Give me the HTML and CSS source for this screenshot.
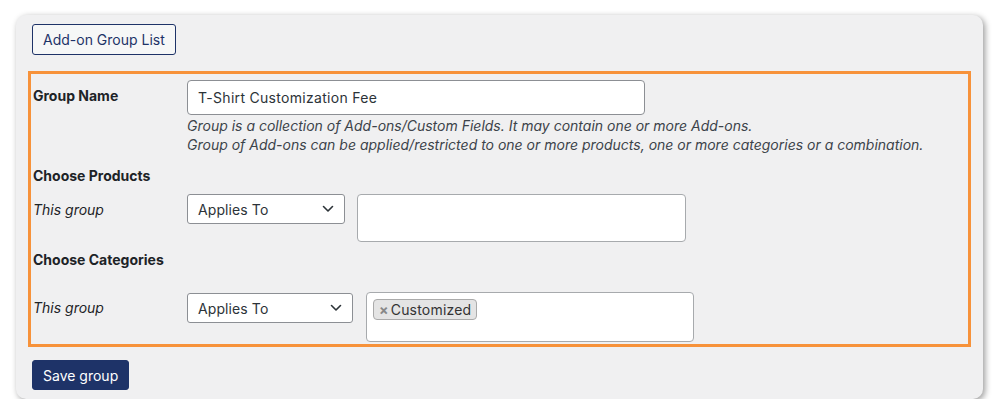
FILE: index.html
```html
<!DOCTYPE html>
<html lang="en">
<head>
    <meta charset="UTF-8">
    <meta name="viewport" content="width=device-width, initial-scale=1.0">
    <title>Edit Add-on Group</title>
    <link rel="stylesheet" href="styles.css">
</head>
<body>
    <div class="card">
        <button class="btn-outline">Add-on Group List</button>

        <div class="group-form">
            <div class="row row-name">
                <label class="field-label" for="groupName">Group Name</label>
                <div class="field">
                    <input type="text" id="groupName" class="text-input" value="T-Shirt Customization Fee">
                    <p class="description">Group is a collection of Add-ons/Custom Fields. It may contain one or more Add-ons.<br>Group of Add-ons can be applied/restricted to one or more products, one or more categories or a combination.</p>
                </div>
            </div>

            <h4 class="section-title products-title">Choose Products</h4>
            <div class="row row-products">
                <span class="field-label italic">This group</span>
                <div class="field inline">
                    <div class="select select-products">
                        <span>Applies To</span>
                        <svg width="12" height="8" viewBox="0 0 12 8"><path d="M1.5 1.5 6 6l4.5-4.5" fill="none" stroke="#2c3338" stroke-width="1.6" stroke-linecap="round" stroke-linejoin="round"/></svg>
                    </div>
                    <div class="multi multi-products"></div>
                </div>
            </div>

            <h4 class="section-title categories-title">Choose Categories</h4>
            <div class="row row-categories">
                <span class="field-label italic">This group</span>
                <div class="field inline">
                    <div class="select select-categories">
                        <span>Applies To</span>
                        <svg width="12" height="8" viewBox="0 0 12 8"><path d="M1.5 1.5 6 6l4.5-4.5" fill="none" stroke="#2c3338" stroke-width="1.6" stroke-linecap="round" stroke-linejoin="round"/></svg>
                    </div>
                    <div class="multi multi-categories">
                        <span class="tag"><span class="tag-remove">×</span>Customized</span>
                    </div>
                </div>
            </div>
        </div>

        <button class="btn-primary">Save group</button>
    </div>
</body>
</html>
```

FILE: styles.css
```css
body {
    margin: 0;
    padding: 15px 0 0 16px;
    background-color: #fff;
    font-family: Inter, "Noto Sans", sans-serif;
    font-size: 14px;
    color: #1d2327;
}
.card {
    width: 967px;
    height: 384px;
    box-sizing: border-box;
    padding: 9px 12px;
    background-color: #f0f0f1;
    border-radius: 10px;
    box-shadow: 2px 2px 6px rgba(0,0,0,0.4);
}
button {
    font-family: inherit;
    font-size: 14px;
    cursor: pointer;
    border-radius: 3px;
}
.btn-outline {
    margin-left: 4px;
    height: 31px;
    padding: 0 10px;
    background-color: #f6f7f7;
    border: 1px solid #1e3368;
    color: #1e3368;
}
.group-form {
    margin-top: 16px;
    height: 276px;
    box-sizing: border-box;
    border: 3px solid #f7923a;
    padding: 6px 0 0 2px;
}
.row {
    display: flex;
}
.field-label {
    width: 154px;
    flex-shrink: 0;
    font-weight: 700;
    line-height: 20px;
    padding-top: 6px;
}
.field-label.italic {
    font-weight: 400;
    font-style: italic;
}
.text-input {
    display: block;
    width: 458px;
    height: 35px;
    box-sizing: border-box;
    margin: 0;
    padding: 0 10px;
    border: 1px solid #8c8f94;
    border-radius: 4px;
    background: #fff;
    font-family: inherit;
    font-size: 14px;
    letter-spacing: 0.3px;
    color: #2c3338;
}
.description {
    margin: 1px 0 0;
    font-style: italic;
    line-height: 19px;
    color: #3c434a;
}
.section-title {
    margin: 0;
    font-size: 14px;
    line-height: 20px;
    font-weight: 700;
}
.products-title {
    margin-top: 12px;
}
.categories-title {
    margin-top: 8px;
}
.row-products {
    margin-top: 8px;
}
.row-categories {
    margin-top: 22px;
}
.inline {
    display: flex;
    align-items: flex-start;
}
.select {
    display: flex;
    align-items: center;
    justify-content: space-between;
    height: 30px;
    box-sizing: border-box;
    padding: 0 10px;
    background: #fff;
    border: 1px solid #8c8f94;
    border-radius: 3px;
    letter-spacing: 0.1px;
    color: #2c3338;
}
.select-products {
    width: 158px;
}
.select-categories {
    width: 166px;
    margin-top: 1px;
}
.multi {
    box-sizing: border-box;
    background: #fff;
    border: 1px solid #a7aaad;
    border-radius: 4px;
}
.multi-products {
    width: 329px;
    height: 48px;
    margin-left: 12px;
}
.multi-categories {
    width: 328px;
    height: 50px;
    margin-left: 13px;
    padding: 6px 0 0 6px;
}
.tag {
    display: inline-flex;
    align-items: center;
    height: 21px;
    box-sizing: border-box;
    padding: 0 5px;
    background: #e4e4e4;
    border: 1px solid #aaa;
    border-radius: 4px;
    color: #333;
    font-size: 14px;
    letter-spacing: 0.2px;
}
.tag-remove {
    color: #888;
    font-weight: 700;
    margin-right: 2px;
}
.btn-primary {
    margin: 13px 0 0 4px;
    height: 30px;
    padding: 0 10px;
    background-color: #1e3368;
    border: 1px solid #1e3368;
    color: #fff;
}
```
